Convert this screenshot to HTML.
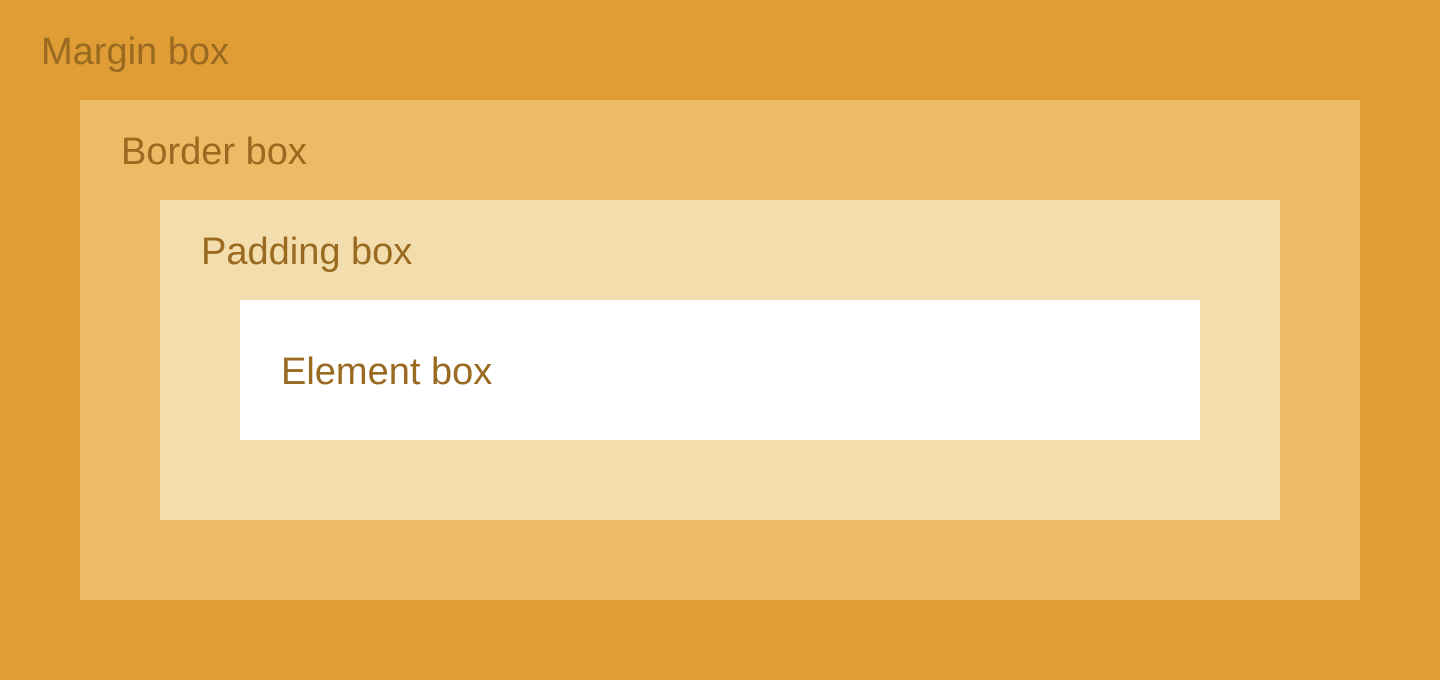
<!DOCTYPE html>
<html><head><style>
html,body{margin:0;padding:0;width:1440px;height:680px;overflow:hidden;background:#E09D36;font-family:"Liberation Sans",sans-serif;}
.b{position:absolute;}
.t{position:absolute;color:#9a6a20;font-size:38px;line-height:1;white-space:nowrap;letter-spacing:0px;}
</style></head><body>
<div class="b" style="left:80px;top:100px;width:1280px;height:500px;background:#EBBC65"></div>
<div class="b" style="left:160px;top:200px;width:1120px;height:320px;background:#F3DDAD"></div>
<div class="b" style="left:240px;top:300px;width:960px;height:140px;background:#fff"></div>
<div class="t" style="left:41px;top:33px">Margin box</div>
<div class="t" style="left:121px;top:133px">Border box</div>
<div class="t" style="left:201px;top:233px">Padding box</div>
<div class="t" style="left:281px;top:353px">Element box</div>
</body></html>
